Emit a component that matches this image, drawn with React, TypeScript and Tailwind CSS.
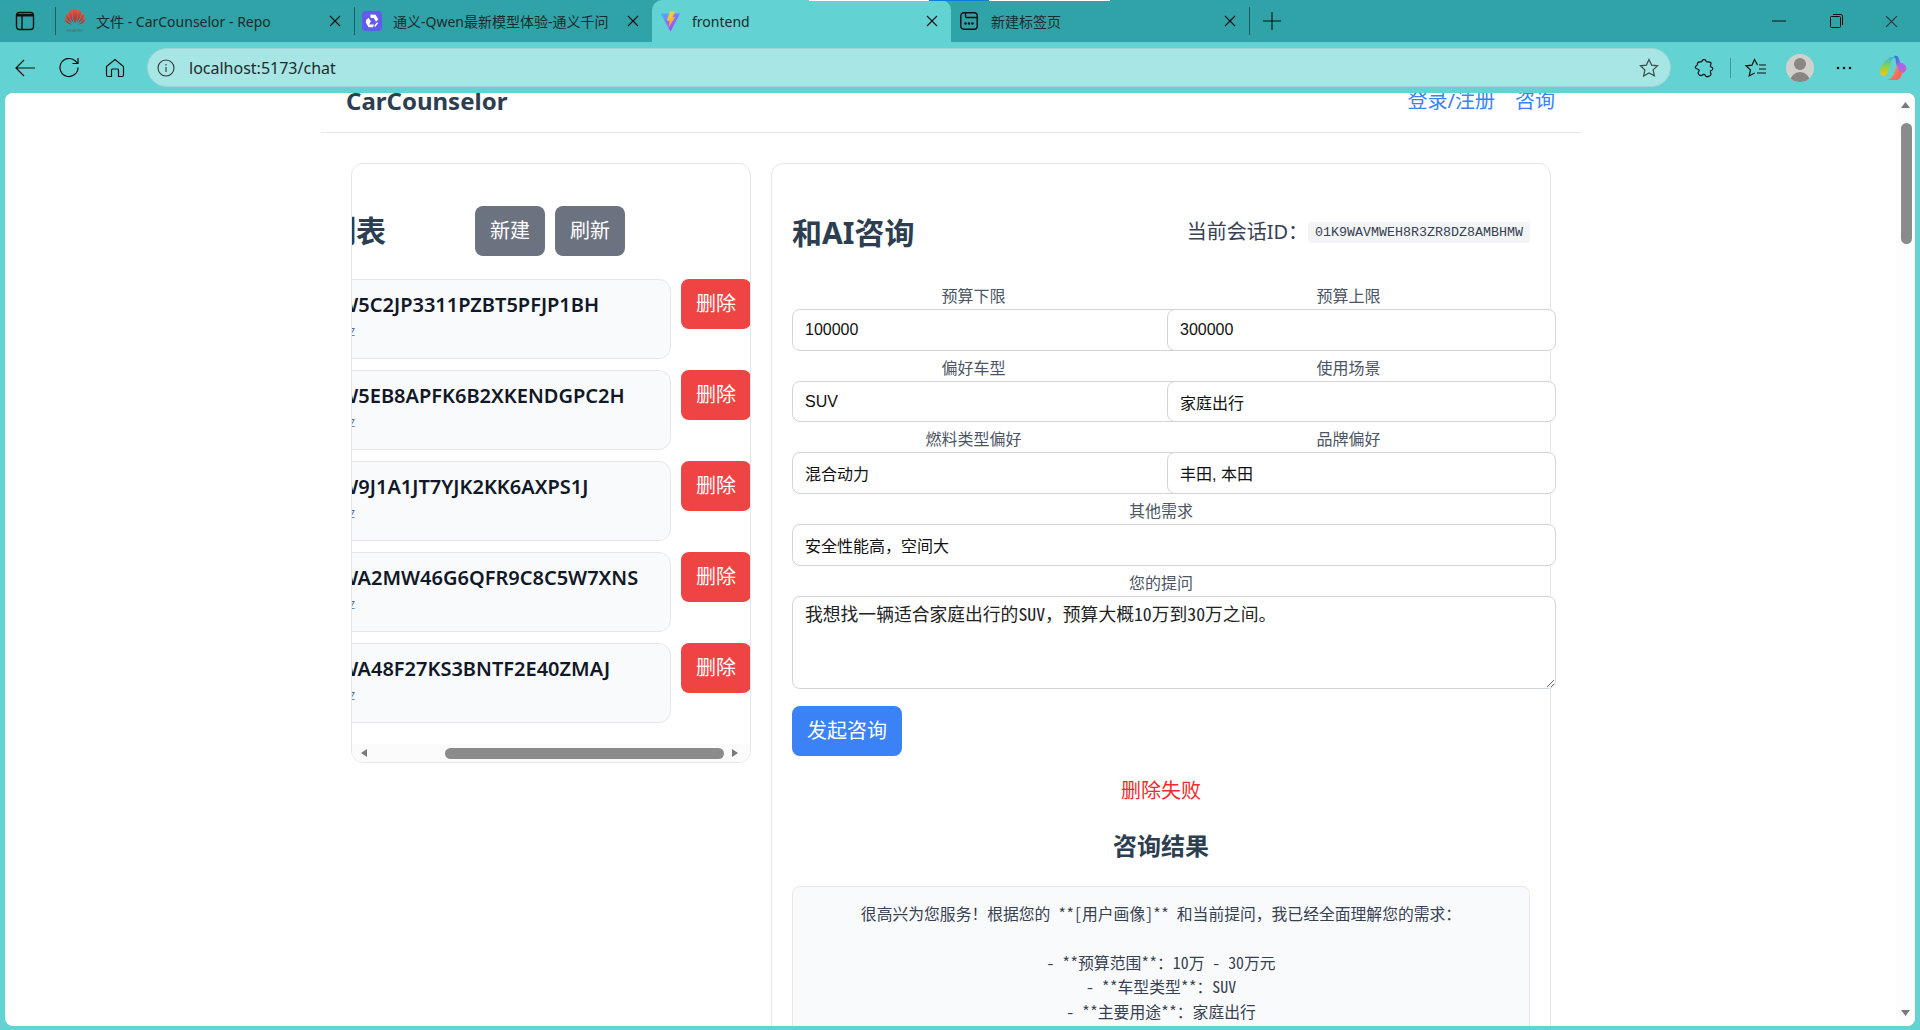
import React from "react";

const Sidebar = () => (
  <svg width="20" height="20" viewBox="0 0 20 20" fill="none" stroke="#111" strokeWidth="1.4">
    <rect x="1.5" y="1.5" width="17" height="17" rx="3" />
    <path d="M7 4v14" />
    <path d="M2 4.2h16" strokeWidth="2.6" />
  </svg>
);
const Huawei = () => (
  <svg width="22" height="26" viewBox="0 0 22 26">
    <defs>
      <linearGradient id="hw" x1="0" y1="0" x2="0" y2="1">
        <stop offset="0" stopColor="#f0553f" />
        <stop offset="1" stopColor="#c5131b" />
      </linearGradient>
    </defs>
    <g fill="url(#hw)">
      <path d="M10.5 15 C9 10 7.5 5 9 1 L11 1 C11 6 11 10 10.5 15Z" />
      <path d="M11.5 15 C13 10 14.5 5 13 1 L11 1 C11 6 11 10 11.5 15Z" />
      <path d="M9.5 15 C7 11 4 8 5 3.5 L8 1.8 C7.5 7 8 11 9.5 15Z" />
      <path d="M12.5 15 C15 11 18 8 17 3.5 L14 1.8 C14.5 7 14 11 12.5 15Z" />
      <path d="M8.5 15.5 C5.5 13 2 12 1.5 7.5 L4 5 C4.5 9 6 12.5 8.5 15.5Z" />
      <path d="M13.5 15.5 C16.5 13 20 12 20.5 7.5 L18 5 C17.5 9 16 12.5 13.5 15.5Z" />
      <path d="M8 16.5 C5 16 2 15 0.5 12 L1.2 10 C3 13 5 15 8 16.5Z" />
      <path d="M14 16.5 C17 16 20 15 21.5 12 L20.8 10 C19 13 17 15 14 16.5Z" />
    </g>
    <text x="11" y="24" textAnchor="middle" fontSize="4" fill="#5a6a6a" fontFamily="Liberation Sans">HUAWEI</text>
  </svg>
);
const Qwen = () => (
  <svg width="20" height="20" viewBox="0 0 20 20">
    <rect width="20" height="20" rx="4" fill="#615ced" />
    <path d="M8.4 3.6 L13.6 3.8 L16.3 8.4 L13.9 10.8 L11.9 7 L8.6 7 Z M4.1 9 L6.6 6.8 L8.9 10.6 L7.2 13.6 L12 13.6 L11.1 16.3 L6.6 16.3 L3.9 11.8 Z M14.9 11.6 L16.3 11.9 L13 16.2 L12.4 14.3 Z" fill="#fff" />
  </svg>
);
const Vite = () => (
  <svg width="21" height="21" viewBox="0 0 21 21">
    <defs>
      <linearGradient id="vp" x1="0" y1="0" x2="0.7" y2="1">
        <stop offset="0" stopColor="#41b9ff" />
        <stop offset="1" stopColor="#bd34fe" />
      </linearGradient>
      <linearGradient id="vy" x1="0" y1="0" x2="0.3" y2="1">
        <stop offset="0" stopColor="#ffdb4d" />
        <stop offset="1" stopColor="#ff9b21" />
      </linearGradient>
    </defs>
    <path d="M0.5 2.5 L20 2.5 L10.5 20.5 Z" fill="url(#vp)" />
    <path d="M10 0.5 L15 0.5 L12.6 6 L15.2 6 L8.4 17 L9.8 10 L6.8 9.6 Z" fill="url(#vy)" />
  </svg>
);
const NewTab = () => (
  <svg width="18" height="18" viewBox="0 0 18 18" fill="none" stroke="#111" strokeWidth="1.4">
    <rect x="0.8" y="0.8" width="16.4" height="16.4" rx="3" />
    <path d="M5.5 1v3.5a1 1 0 0 0 1 1H17" />
    <circle cx="5.5" cy="11.5" r="0.6" fill="#111" />
    <circle cx="9" cy="11.5" r="0.6" fill="#111" />
    <circle cx="12.5" cy="11.5" r="0.6" fill="#111" />
  </svg>
);
const Close = ({ s = 12, c = "#111" }: { s?: number; c?: string }) => (
  <svg width={s} height={s} viewBox="0 0 12 12" stroke={c} strokeWidth="1.1" fill="none">
    <path d="M1 1l10 10M11 1L1 11" />
  </svg>
);

function Tab({ w, icon, title, active, pl, gap, extra }: { w: string; icon: React.ReactNode; title: string; active?: boolean; pl: string; gap: string; extra?: string }) {
  return (
    <div className={`${w} ${pl} ${extra ?? ""} flex shrink-0 items-center pr-[13px] ${active ? "h-[42px] rounded-t-[10px] bg-[#62d2d2]" : "h-[42px]"}`}>
      <div className="flex w-[22px] shrink-0 items-center justify-center">{icon}</div>
      <div className={`${gap} min-w-0 flex-1 overflow-hidden whitespace-nowrap text-[14px] text-[#1b2b2b]`}>{title}</div>
      <div className="ml-[8px] shrink-0">
        <Close />
      </div>
    </div>
  );
}

const Sep = () => <div className="h-[28px] w-px shrink-0 bg-[#1f5f63]" />;

function TopBars() {
  return (
    <>
      <div className="relative flex h-[42px] shrink-0 items-center bg-[#30a3a8]">
        <div className="absolute left-[809px] top-0 flex h-px">
          <div className="w-[120px] bg-white" />
          <div className="w-[60px] bg-[#0a7fd6]" />
          <div className="w-[121px] bg-white" />
        </div>
        <div className="flex w-[55px] shrink-0 pl-[15px]">
          <Sidebar />
        </div>
        <Sep />
        <Tab w="w-[298px]" pl="pl-[8px]" gap="ml-[10px]" icon={<Huawei />} title="文件 - CarCounselor - Repo" />
        <Sep />
        <Tab w="w-[297px]" pl="pl-[6px]" gap="ml-[10px]" icon={<Qwen />} title="通义-Qwen最新模型体验-通义千问" />
        <Tab w="w-[299px]" pl="pl-[7px]" gap="ml-[11px]" active icon={<Vite />} title="frontend" />
        <Tab w="w-[298px]" pl="pl-[7px]" gap="ml-[11px]" icon={<NewTab />} title="新建标签页" />
        <Sep />
        <svg className="ml-[13px]" width="18" height="18" viewBox="0 0 18 18" stroke="#111" strokeWidth="1.1" fill="none">
          <path d="M9 0v18M0 9h18" />
        </svg>
        <div className="ml-auto flex items-center">
          <svg className="mr-[44px]" width="14" height="2" viewBox="0 0 14 2"><path d="M0 1h14" stroke="#111" strokeWidth="1" /></svg>
          <svg className="mr-[42px]" width="13" height="14" viewBox="0 0 13 14" fill="none" stroke="#111" strokeWidth="1">
            <rect x="0.5" y="2.5" width="10" height="11" rx="1" />
            <path d="M3 0.5h8a1.5 1.5 0 0 1 1.5 1.5v9" />
          </svg>
          <div className="mr-[22px]">
            <Close s={13} c="#1b3a3d" />
          </div>
        </div>
      </div>
      <div className="flex h-[51px] shrink-0 items-center bg-[#62d2d2]">
        <div className="ml-[2px] flex w-[45px] justify-center">
          <svg width="20" height="18" viewBox="0 0 20 18" fill="none" stroke="#111" strokeWidth="1.2"><path d="M20 9H1M9 1L1 9l8 8" /></svg>
        </div>
        <div className="flex w-[45px] justify-center">
          <svg width="21" height="21" viewBox="0 0 21 21" fill="none" stroke="#111" strokeWidth="1.2">
            <path d="M19 10.5a9 9 0 1 1-3-6.7L19 6.5" />
            <path d="M19 1v5.5h-5.5" />
          </svg>
        </div>
        <div className="flex w-[45px] justify-center">
          <svg width="20" height="20" viewBox="0 0 20 20" fill="none" stroke="#111" strokeWidth="1.2">
            <path d="M1.5 8.5L10 1.5l8.5 7V17a1.5 1.5 0 0 1-1.5 1.5h-3.5V12a1 1 0 0 0-1-1h-5a1 1 0 0 0-1 1v6.5H3A1.5 1.5 0 0 1 1.5 17Z" />
          </svg>
        </div>
        <div className="ml-[10px] flex h-[39px] w-[1524px] shrink-0 items-center rounded-full border border-[#9fd4d6] bg-[#a8e6e6] pl-[9px] pr-[11px]">
          <svg width="18" height="18" viewBox="0 0 18 18" fill="none" stroke="#333" strokeWidth="1.1">
            <circle cx="9" cy="9" r="8" />
            <path d="M9 8v5M9 5v1.4" />
          </svg>
          <div className="ml-[14px] text-[16px] text-[#1c2c2c]">localhost:5173/chat</div>
          <svg className="ml-auto" width="20" height="20" viewBox="0 0 20 20" fill="none" stroke="#3b4f50" strokeWidth="1.2">
            <path d="M10 1.5l2.6 5.6 6 .7-4.5 4.1 1.3 6L10 15l-5.4 3 1.3-6L1.4 7.8l6-.7Z" />
          </svg>
        </div>
        <div className="ml-[16px] flex w-[34px] justify-center">
          <svg width="20" height="20" viewBox="0 0 20 20" fill="none" stroke="#111" strokeWidth="1.2">
            <path d="M8 3.2C8 1 12 1 12 3.2c0 1.3 4.8 0 5 1.8.2 1.6-1 2.7-.6 3.4.5.8 2.4.6 2.4 2.4s-2 1.5-2.4 2.4c-.4.8.8 2 .6 3.3-.3 1.6-4.2 2.8-5 1.8-.9-1.1-1-2-2.2-2-1.3 0-1.6 1.4-2.8 1.4-1.5 0-2.8-1.6-2.8-3 0-1.2 1-1.6 1-2.5S2 10.900 1.400 10c-.7-1 1-2.600 1.600-2.800.5-.2.300-1.700.8-2.600C4.600 3.100 8 4.500 8 3.200Z" />
          </svg>
        </div>
        <div className="ml-[9px] h-[20px] w-px bg-[#3f9599]" />
        <div className="ml-[8px] flex w-[34px] justify-center">
          <svg width="22" height="20" viewBox="0 0 22 20" fill="none" stroke="#111" strokeWidth="1.2">
            <path d="M12.500 7l-3-5.500-2.500 5.600-6 .7 4.500 4.100-1.300 6 5.400-3" />
            <path d="M14 7h7M14 11h7M12 15h9" />
          </svg>
        </div>
        <div className="relative ml-[13px] h-[28px] w-[28px] overflow-hidden rounded-full bg-[#d2d0cd]">
          <div className="mx-auto mt-[4px] h-[12px] w-[12px] rounded-full bg-[#8a8683]" />
          <div className="mx-auto mt-[2px] h-[16px] w-[20px] rounded-t-full bg-[#8a8683]" />
        </div>
        <div className="ml-[14px] flex w-[32px] justify-center">
          <svg width="16" height="4" viewBox="0 0 16 4" fill="#111">
            <circle cx="2" cy="2" r="1.300" />
            <circle cx="8" cy="2" r="1.300" />
            <circle cx="14" cy="2" r="1.300" />
          </svg>
        </div>
        <div className="ml-[18px] flex w-[30px] justify-center">
          <svg width="28" height="26" viewBox="0 0 28 26">
            <defs>
              <linearGradient id="c1" x1="0" y1="0" x2="0" y2="1">
                <stop offset="0" stopColor="#2fb6e8" />
                <stop offset="0.5" stopColor="#8fd14a" />
                <stop offset="1" stopColor="#f5c518" />
              </linearGradient>
              <linearGradient id="c2" x1="0" y1="0" x2="1" y2="1">
                <stop offset="0" stopColor="#1e6fe0" />
                <stop offset="0.5" stopColor="#a06be8" />
                <stop offset="1" stopColor="#d05ad0" />
              </linearGradient>
              <linearGradient id="c3" x1="0" y1="0" x2="1" y2="1">
                <stop offset="0" stopColor="#f6b13a" />
                <stop offset="1" stopColor="#f2506b" />
              </linearGradient>
            </defs>
            <path d="M9 4 Q10 2 13 2 L17 2 Q13 3 12 7 L9 17 Q8 21 4 21 Q0 20 1 15 Q2 9 9 4Z" fill="url(#c1)" />
            <path d="M15 1 Q19 0 20 4 L21.500 8 Q26 8 27.500 13 Q27 17 24 18 L18 18 L17 8 Q17 3 15 1Z" fill="url(#c2)" />
            <path d="M18 8 Q16 18 13 22 Q11 25 8 25 L17 25 Q21 25 22.500 20 L24 16 Q20 18 19 14Z" fill="url(#c3)" />
          </svg>
        </div>
      </div>
    </>
  );
}

const sessions = ["5C2JP3311PZBT5PFJP1BH", "5EB8APFK6B2XKENDGPC2H", "9J1A1JT7YJK2KK6AXPS1J", "A2MW46G6QFR9C8C5W7XNS", "A48F27KS3BNTF2E40ZMAJ"];

function SessionCard() {
  return (
    <div className="flex h-[600px] w-[400px] shrink-0 flex-col overflow-hidden rounded-[12px] border border-[#e5e7eb]">
      <div className="-ml-[111px] w-[900px] flex-1 pt-[42px]">
        <div className="flex h-[50px] items-center">
          <h2 className="ml-[25px] w-[209px] text-[30px] font-bold leading-[50px] text-[#2c3e50]">会话列表</h2>
          <button className="h-[50px] w-[70px] rounded-[8px] bg-[#6b7280] text-[20px] text-white">新建</button>
          <button className="ml-[10px] h-[50px] w-[70px] rounded-[8px] bg-[#6b7280] text-[20px] text-white">刷新</button>
        </div>
        <div className="mt-[23px] flex flex-col gap-[11px]">
          {sessions.map((s) => (
            <div key={s} className="flex items-start">
              <div className="h-[80px] w-[430px] rounded-[12px] border border-[#e5e7eb] bg-[#f9fafb] pl-[50px] pt-[11px]">
                <div className="whitespace-nowrap text-[20px] font-semibold leading-[27px] text-[#111827]">01K9W{s}</div>
                <div className="mt-[7px] flex w-[63px] justify-end whitespace-nowrap text-[10px] leading-[14px] text-[#4b6a99]">09:12:30Z</div>
              </div>
              <button className="ml-[10px] h-[50px] w-[70px] shrink-0 rounded-[8px] bg-[#ef4444] text-[20px] text-white">删除</button>
            </div>
          ))}
        </div>
      </div>
      <div className="flex h-[18px] shrink-0 items-center bg-[#fbfbfb]">
        <svg className="ml-[9px]" width="6" height="8" viewBox="0 0 6 8"><path d="M6 0v8L0 4Z" fill="#7a7a7a" /></svg>
        <div className="ml-[78px] h-[11px] w-[279px] rounded-full bg-[#8b8b8b]" />
        <svg className="ml-[8px]" width="6" height="8" viewBox="0 0 6 8"><path d="M0 0v8l6-4Z" fill="#7a7a7a" /></svg>
      </div>
    </div>
  );
}

const inputClass = "h-[41.7px] w-[calc(100%+26px)] rounded-[8px] border border-[#d1d5db] bg-white px-[12px] font-['Liberation_Sans','Noto_Sans_CJK_SC',sans-serif] text-[16px] text-[#111]";
const labelClass = "mb-[4px] block h-[18px] text-center text-[16px] leading-[18px] text-[#4b5563]";

function Field({ label, value, full }: { label: string; value: string; full?: boolean }) {
  return (
    <div className={full ? "col-span-2" : ""}>
      <label className={labelClass}>{label}</label>
      <input className={inputClass} defaultValue={value} />
    </div>
  );
}

function ChatCard() {
  return (
    <div className="min-h-[900px] w-[780px] shrink-0 rounded-t-[12px] border border-[#e5e7eb] px-[20px] pt-[44px]">
      <div className="flex h-[48px] items-center justify-between">
        <h2 className="text-[30px] font-bold text-[#2c3e50]">和AI咨询</h2>
        <div className="flex items-center text-[20px] text-[#374151]">
          当前会话ID：
          <code className="rounded-[4px] bg-[#f3f4f6] px-[7px] py-[1px] font-['Liberation_Mono',monospace] text-[13.33px] leading-[19px] text-[#374151]">01K9WAVMWEH8R3ZR8DZ8AMBHMW</code>
        </div>
      </div>
      <div className="mt-[31px] grid grid-cols-2 gap-x-[12px] gap-y-[8px]">
        <Field label="预算下限" value="100000" />
        <Field label="预算上限" value="300000" />
        <Field label="偏好车型" value="SUV" />
        <Field label="使用场景" value="家庭出行" />
        <Field label="燃料类型偏好" value="混合动力" />
        <Field label="品牌偏好" value="丰田, 本田" />
        <Field label="其他需求" value="安全性能高，空间大" full />
        <div className="col-span-2">
          <label className={labelClass}>您的提问</label>
          <textarea
            className="h-[93px] w-[calc(100%+26px)] rounded-[8px] border border-[#d1d5db] bg-white px-[12px] py-[3px] align-top font-['Noto_Sans_Mono_CJK_SC','Noto_Sans_CJK_SC',monospace] text-[17.800px] leading-[26px] text-[#222]"
            defaultValue="我想找一辆适合家庭出行的SUV，预算大概10万到30万之间。"
          />
        </div>
      </div>
      <button className="mt-[17px] h-[50px] w-[110px] rounded-[8px] bg-[#3b82f6] text-[20px] text-white">发起咨询</button>
      <p className="mt-[20px] text-center text-[20px] leading-[30px] text-[#ef2b2b]">删除失败</p>
      <h3 className="mt-[25px] text-center text-[24px] font-bold leading-[30px] text-[#2c3e50]">咨询结果</h3>
      <div className="mt-[25px] rounded-t-[8px] border border-[#e5e7eb] bg-[#f9fafb] px-[20px] pt-[15px] text-center font-['Noto_Sans_Mono_CJK_SC','Noto_Sans_CJK_SC',monospace] text-[15.800px] leading-[24.500px] text-[#374151]">
        <div>很高兴为您服务！根据您的 **[用户画像]** 和当前提问，我已经全面理解您的需求：</div>
        <div className="h-[24.500px]" />
        <div>- **预算范围**：10万 - 30万元</div>
        <div>- **车型类型**：SUV</div>
        <div>- **主要用途**：家庭出行</div>
        <div>- **燃料类型**：混合动力</div>
      </div>
    </div>
  );
}

export default function App() {
  return (
    <div className="flex h-[1030px] w-[1920px] flex-col overflow-hidden bg-[#62d2d2] font-['Noto_Sans','Noto_Sans_CJK_SC',sans-serif]">
      <TopBars />
      <div className="mx-[5px] flex h-[933px] shrink-0 overflow-hidden rounded-[8px] bg-white">
        <main className="min-w-0 flex-1 overflow-hidden">
          <div className="ml-[316px] w-[1260px]">
            <header className="flex h-[40px] items-start justify-between border-b border-[#e5e7eb] pl-[25px] pr-[26px]">
              <div className="-mt-[8px] text-[24px] font-bold leading-[32px] text-[#2c3e50]">CarCounselor</div>
              <nav className="-mt-[7px] flex gap-[20px] text-[20px] leading-[30px] text-[#3b82f6]">
                <a>登录/注册</a>
                <a>咨询</a>
              </nav>
            </header>
            <div className="flex items-start gap-[20px] pl-[30px] pt-[30px]">
              <SessionCard />
              <ChatCard />
            </div>
          </div>
        </main>
        <aside className="flex w-[19px] shrink-0 flex-col items-center bg-[#fdfdfd] pt-[9px]">
          <svg width="9" height="6" viewBox="0 0 9 6"><path d="M0 6h9L4.500 0Z" fill="#7a7a7a" /></svg>
          <div className="ml-[1px] mt-[15px] h-[121px] w-[11px] rounded-full bg-[#8b8b8b]" />
          <svg className="mt-auto mb-[10px]" width="9" height="6" viewBox="0 0 9 6"><path d="M0 0h9L4.500 6Z" fill="#7a7a7a" /></svg>
        </aside>
      </div>
    </div>
  );
}
